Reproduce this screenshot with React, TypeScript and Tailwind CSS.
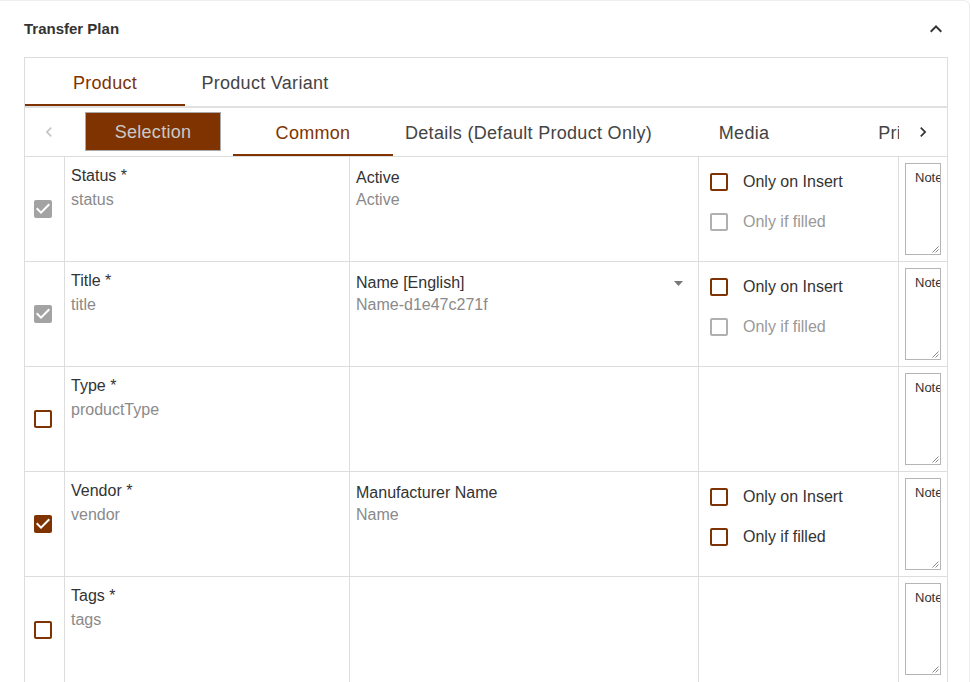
import React from "react"

const BROWN = "#7f3300"

type Box = "checked" | "checkedDisabled" | "empty" | "emptyDisabled"

function CheckIcon({ kind }: { kind: Box }) {
  const color =
    kind === "checked" || kind === "empty" ? BROWN : kind === "checkedDisabled" ? "#a3a3a3" : "#b0b0b0"
  const filled = kind === "checked" || kind === "checkedDisabled"
  return (
    <svg width="24" height="24" viewBox="0 0 24 24" className="shrink-0">
      {filled ? (
        <path
          fill={color}
          d="M19 3H5c-1.11 0-2 .9-2 2v14c0 1.1.89 2 2 2h14c1.11 0 2-.9 2-2V5c0-1.1-.89-2-2-2zm-9 14l-5-5 1.41-1.41L10 14.17l7.59-7.59L19 8l-9 9z"
        />
      ) : (
        <path
          fill={color}
          d="M19 5v14H5V5h14m0-2H5c-1.1 0-2 .9-2 2v14c0 1.1.9 2 2 2h14c1.1 0 2-.9 2-2V5c0-1.1-.9-2-2-2z"
        />
      )}
    </svg>
  )
}

type Row = {
  check: Box
  label: string
  field: string
  mapLabel?: string
  mapSub?: string
  dropdown?: boolean
  options?: { insert: boolean; filled: boolean }
}

const rows: Row[] = [
  { check: "checkedDisabled", label: "Status *", field: "status", mapLabel: "Active", mapSub: "Active", options: { insert: true, filled: false } },
  { check: "checkedDisabled", label: "Title *", field: "title", mapLabel: "Name [English]", mapSub: "Name-d1e47c271f", dropdown: true, options: { insert: true, filled: false } },
  { check: "empty", label: "Type *", field: "productType" },
  { check: "checked", label: "Vendor *", field: "vendor", mapLabel: "Manufacturer Name", mapSub: "Name", options: { insert: true, filled: true } },
  { check: "empty", label: "Tags *", field: "tags" },
]

function Option({ label, enabled }: { label: string; enabled: boolean }) {
  return (
    <div className="flex h-10 items-center gap-3">
      <CheckIcon kind={enabled ? "empty" : "emptyDisabled"} />
      <span className={enabled ? "text-[16px] text-[#333]" : "text-[16px] text-[#999]"}>{label}</span>
    </div>
  )
}

// looks like a textarea with its placeholder, resize grip drawn by hand
function NotesBox() {
  return (
    <div className="relative h-[92px] w-[36px] overflow-hidden border border-[#b5b5b5] bg-white pt-[6px] pl-[9px]">
      <div className="text-[13px] leading-[16px] whitespace-nowrap text-[#333]">Notes</div>
      <svg width="7" height="7" viewBox="0 0 7 7" className="absolute right-[1px] bottom-[1px]">
        <path d="M6.5 0.5L0.5 6.5M6.5 3.5L3.5 6.5" stroke="#888" strokeWidth="1" />
      </svg>
    </div>
  )
}

export default function App() {
  return (
    <div
      className="h-[682px] w-[972px] overflow-hidden bg-white"
      style={{ fontFamily: '"Liberation Sans", Arial, sans-serif' }}
    >
      <div className="w-[970px] rounded-tr-[6px] border-t border-r border-[#eeeeee] pr-[21px] pl-6">
        {/* Header */}
        <div className="flex h-[56px] items-center justify-between">
          <span className="text-[15px] font-bold text-[#333]">Transfer Plan</span>
          <svg width="24" height="24" viewBox="0 0 24 24">
            <path fill="#333" d="M12 8l-6 6 1.41 1.41L12 10.83l4.59 4.58L18 14z" />
          </svg>
        </div>

        <div className="w-[924px] border border-[#dddddd]">
          {/* Main tabs */}
          <div className="flex h-[50px] border-b-2 border-[#e0e0e0] text-[18px] tracking-[0.3px]">
            <div className="relative flex h-[48px] w-[160px] items-center justify-center pt-[2px]" style={{ color: BROWN }}>
              Product
              <div className="absolute right-0 bottom-0 left-0 h-[2px] bg-[#7f3300]" />
            </div>
            <div className="flex h-[48px] w-[160px] items-center justify-center pt-[2px] text-[#444]">Product Variant</div>
          </div>

          {/* Sub tabs */}
          <div className="flex h-[48px] text-[18px] tracking-[0.3px]">
            <div className="flex w-12 shrink-0 items-center justify-center">
              <svg width="20" height="20" viewBox="0 0 24 24">
                <path fill="#c4c4c4" d="M15.41 16.59L10.83 12l4.58-4.59L14 6l-6 6 6 6 1.41-1.41z" />
              </svg>
            </div>
            <div className="flex flex-1 overflow-hidden">
              <div className="flex w-[160px] shrink-0 px-3 pt-1 pb-[5px]">
                <div className="flex flex-1 items-center justify-center border border-[#aaaaaa] bg-[#7f3300] pt-[2px] text-[#c9c9c9]">
                  Selection
                </div>
              </div>
              <div className="relative flex w-[160px] shrink-0 items-center justify-center pt-[2px] text-[#7f3300]">
                Common
                <div className="absolute right-0 bottom-0 left-0 h-[2px] bg-[#7f3300]" />
              </div>
              <div className="flex shrink-0 items-center justify-center px-3 pt-[2px] whitespace-nowrap text-[#444]">
                Details (Default Product Only)
              </div>
              <div className="flex w-[160px] shrink-0 items-center justify-center pt-[2px] text-[#444]">Media</div>
              <div className="flex w-[160px] shrink-0 items-center justify-center pt-[2px] text-[#444]">Prices</div>
            </div>
            <div className="flex w-12 shrink-0 items-center justify-center">
              <svg width="20" height="20" viewBox="0 0 24 24">
                <path fill="#333" d="M8.59 16.59L13.17 12 8.59 7.41 10 6l6 6-6 6-1.41-1.41z" />
              </svg>
            </div>
          </div>

          {/* Table */}
          <div className="border-t border-[#dddddd]">
            {rows.map((r) => (
              <div
                key={r.field}
                className="grid h-[105px] grid-cols-[40px_285px_349px_200px_48px] border-b border-[#dddddd] last:border-b-0"
              >
                <div className="flex items-center border-r border-[#dddddd] pl-[6px]">
                  <CheckIcon kind={r.check} />
                </div>
                <div className="border-r border-[#dddddd] px-[6px] pt-[7px] text-[16px] leading-[24px]">
                  <div className="text-[#333]">{r.label}</div>
                  <div className="text-[#8a8a8a]">{r.field}</div>
                </div>
                <div className="relative border-r border-[#dddddd] px-[6px] pt-[10px] text-[16px] leading-[22px]">
                  {r.mapLabel && <div className="text-[#333]">{r.mapLabel}</div>}
                  {r.mapSub && <div className="text-[#8a8a8a]">{r.mapSub}</div>}
                  {r.dropdown && (
                    <svg width="9" height="5" viewBox="0 0 9 5" className="absolute top-[19px] right-[15px]">
                      <path d="M0 0h9L4.5 5z" fill="#777" />
                    </svg>
                  )}
                </div>
                <div className="border-r border-[#dddddd] pt-[5px] pl-2">
                  {r.options && (
                    <>
                      <Option label="Only on Insert" enabled={r.options.insert} />
                      <Option label="Only if filled" enabled={r.options.filled} />
                    </>
                  )}
                </div>
                <div className="pt-[6px] pl-[6px]">
                  <NotesBox />
                </div>
              </div>
            ))}
          </div>
        </div>
      </div>
    </div>
  )
}
